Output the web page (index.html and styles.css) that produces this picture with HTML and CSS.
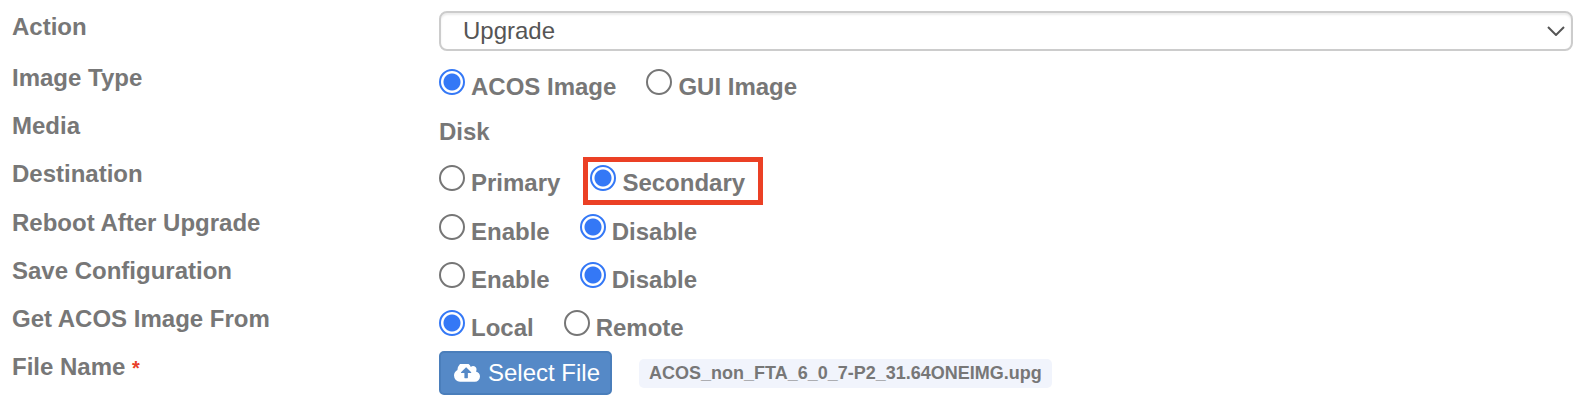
FILE: index.html
```
<!DOCTYPE html>
<html lang="en">
<head>
    <meta charset="UTF-8">
    <meta name="viewport" content="width=device-width, initial-scale=1.0">
    <title>Upgrade</title>
    <link rel="stylesheet" href="styles.css">
</head>
<body>
    <form class="upgrade-form">
        <div class="row row-action">
            <label class="name" for="action">Action</label>
            <div class="select-wrap">
                <select id="action">
                    <option>Upgrade</option>
                </select>
                <svg class="arrow" viewBox="0 0 18 10"><path d="M1 1l8 8 8-8" fill="none" stroke="#555" stroke-width="2"/></svg>
            </div>
        </div>
        <div class="row" role="radiogroup" aria-labelledby="imageType">
            <span class="name" id="imageType">Image Type</span>
            <div class="options">
                <label class="option"><input type="radio" name="imageType" checked><span>ACOS Image</span></label>
                <label class="option"><input type="radio" name="imageType"><span>GUI Image</span></label>
            </div>
        </div>
        <div class="row">
            <span class="name">Media</span>
            <span class="value">Disk</span>
        </div>
        <div class="row row-destination" role="radiogroup" aria-labelledby="destination">
            <span class="name" id="destination">Destination</span>
            <div class="options">
                <label class="option"><input type="radio" name="destination"><span>Primary</span></label>
                <label class="option highlight"><input type="radio" name="destination" checked><span>Secondary</span></label>
            </div>
        </div>
        <div class="row" role="radiogroup" aria-labelledby="reboot">
            <span class="name" id="reboot">Reboot After Upgrade</span>
            <div class="options">
                <label class="option"><input type="radio" name="reboot"><span>Enable</span></label>
                <label class="option"><input type="radio" name="reboot" checked><span>Disable</span></label>
            </div>
        </div>
        <div class="row" role="radiogroup" aria-labelledby="saveConfig">
            <span class="name" id="saveConfig">Save Configuration</span>
            <div class="options">
                <label class="option"><input type="radio" name="saveConfig"><span>Enable</span></label>
                <label class="option"><input type="radio" name="saveConfig" checked><span>Disable</span></label>
            </div>
        </div>
        <div class="row" role="radiogroup" aria-labelledby="imageFrom">
            <span class="name" id="imageFrom">Get ACOS Image From</span>
            <div class="options">
                <label class="option"><input type="radio" name="imageFrom" checked><span>Local</span></label>
                <label class="option"><input type="radio" name="imageFrom"><span>Remote</span></label>
            </div>
        </div>
        <div class="row">
            <label class="name" for="selectFile">File Name <span class="required">*</span></label>
            <div class="file">
                <button type="button" class="btn" id="selectFile">
                    <svg class="cloud" viewBox="0 256 1920 1280"><path fill="#fff" d="M1280 864q0-14-9-23l-352-352q-9-9-23-9t-23 9l-351 351q-10 12-10 24 0 14 9 23t23 9h224v352q0 13 9.500 22.500t22.500 9.500h192q13 0 22.500-9.500t9.500-22.500v-352h224q13 0 22.500-9.500t9.500-22.500zm640 288q0 159-112.500 271.500t-271.500 112.500h-1088q-185 0-316.500-131.500t-131.500-316.500q0-130 70-240t188-165q-2-30-2-43 0-212 150-362t362-150q156 0 285.500 87t188.500 231q71-62 166-62 106 0 181 75t75 181q0 76-41 138 130 31 213.500 135.500t83.500 238.500z"/></svg>
                    Select File
                </button>
                <span class="file-name">ACOS_non_FTA_6_0_7-P2_31.64ONEIMG.upg</span>
            </div>
        </div>
    </form>
</body>
</html>
```
FILE: styles.css
```
body {
    margin: 0;
    background-color: white;
    color: #777;
    font-family: "Liberation Sans", Arial, sans-serif;
    font-size: 24px;
    font-weight: bold;
    line-height: 32px;
}

.upgrade-form {
    padding: 11px 23px 0 12px;
}

.row {
    display: grid;
    grid-template-columns: 427px 1fr;
    align-items: start;
    min-height: 48px;
}

.row-action {
    min-height: 51px;
}

.row-destination {
    min-height: 49px;
}

.required {
    color: #e8402a;
    font-size: 20px;
}

.select-wrap {
    position: relative;
}

select {
    display: block;
    appearance: none;
    box-sizing: border-box;
    width: 100%;
    height: 40px;
    padding: 0 48px 2px 22px;
    border: 2px solid #ccc;
    border-radius: 8px;
    background-color: white;
    box-shadow: inset 0 2px 2px rgba(0, 0, 0, 0.08);
    color: #555;
    font-family: inherit;
    font-size: 24px;
}

.arrow {
    position: absolute;
    top: 15px;
    right: 8px;
    width: 18px;
    height: 10px;
    pointer-events: none;
}

.options {
    display: flex;
    gap: 30px;
    padding-top: 7px;
}

.option {
    display: flex;
    gap: 6px;
}

.option span {
    padding-top: 2px;
}

input[type="radio"] {
    appearance: none;
    box-sizing: border-box;
    width: 26px;
    height: 26px;
    margin: 0;
    border: 2px solid #767676;
    border-radius: 50%;
    background-color: white;
}

input[type="radio"]:checked {
    border-color: #3478f6;
    background: radial-gradient(circle, #3478f6 8px, white 9px);
}

/* red frame around the selected destination */
.highlight {
    position: relative;
}

.highlight::after {
    content: "";
    position: absolute;
    top: -8px;
    right: -18px;
    bottom: -6px;
    left: -7px;
    border: 5px solid #eb4025;
}

.value {
    padding-top: 6px;
}

.file {
    display: flex;
    align-items: center;
    gap: 27px;
}

.btn {
    display: flex;
    align-items: center;
    gap: 8px;
    height: 44px;
    padding: 0 10px 0 13px;
    border: 2px solid #4a7ebb;
    border-radius: 5px;
    background-color: #5589c7;
    color: white;
    font-family: inherit;
    font-size: 24px;
    cursor: pointer;
}

.cloud {
    width: 26px;
    height: 18px;
}

.file-name {
    padding: 0 10px;
    border-radius: 5px;
    background-color: #f1f4fc;
    font-size: 18px;
    line-height: 29px;
}
```
